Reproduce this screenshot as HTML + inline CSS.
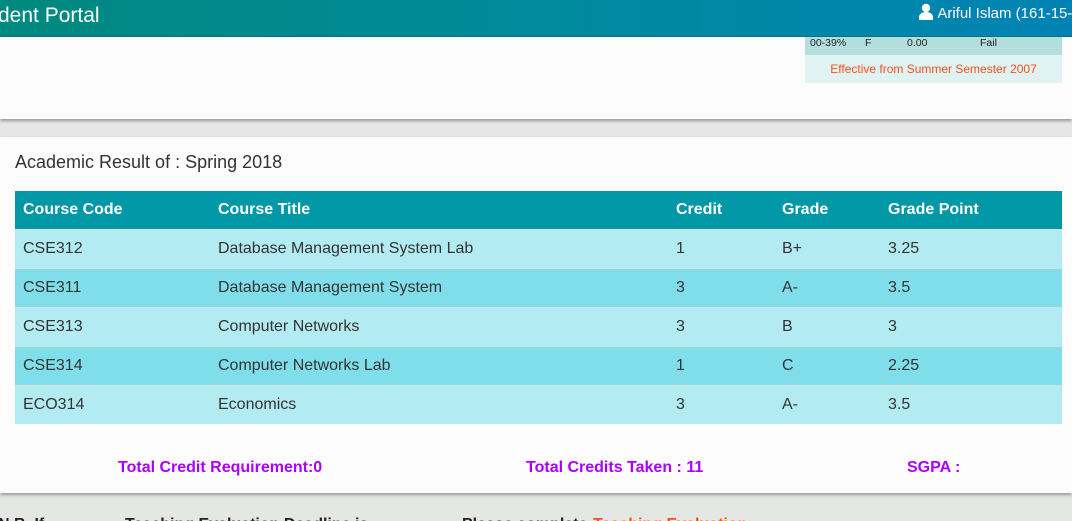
<!DOCTYPE html>
<html style="height:521px;overflow:hidden"><head><meta charset="utf-8"><style>
*{margin:0;padding:0;box-sizing:border-box}
html{width:1072px;height:521px;overflow:hidden}
body{width:1072px;height:521px;overflow:hidden;background:#e5e7e4;font-family:"Liberation Sans",Arial,sans-serif;position:relative}
.top{position:absolute;left:0;top:0;width:1072px;height:37px;background:linear-gradient(90deg,#00897e 0%,#008a9c 50%,#0083b4 100%);border-bottom:1px solid #00707a}
.top .t{position:absolute;left:-2px;top:4px;color:#fff;font-size:21px}
.top .u{position:absolute;left:918px;top:3px;color:#fff;font-size:15px;white-space:nowrap}
.p1{position:absolute;left:0;top:37px;width:1072px;height:82px;background:#fcfcfc;box-shadow:0 2px 3px #999}
.gt{position:absolute;left:805px;top:37px;width:257px}
.gt .r{height:18px;background:#b2dfdb;font-size:10.5px;color:#222;position:relative}
.gt .r span{position:absolute;top:0px}
.gt .e{height:28px;background:#e0f2f1;color:#f4511e;font-size:12px;text-align:center;line-height:28px}
.p2{position:absolute;left:0;top:137px;width:1072px;height:356px;background:#fcfcfc;box-shadow:0 2px 3px #999}
h3{position:absolute;left:15px;top:152px;font-weight:normal;font-size:18px;color:#333}
table{position:absolute;left:15px;top:191px;width:1047px;border-collapse:collapse;font-size:16px;color:#333}
th{background:#0097a7;color:#fff;text-align:left;height:38px;padding-left:8px;font-size:16px}
td{height:39px;padding-left:8px;border-top:1px solid #ddd}
tr.a td{background:#b2ebf2}tr.b td{background:#80deea}
.s{position:absolute;top:459px;color:#aa00ff;font-weight:bold;font-size:16px}
.clip{position:absolute;left:0;top:500px;width:1072px;height:21px;overflow:hidden}
.bt{position:absolute;top:16px;font-weight:bold;font-size:16px;color:#222;white-space:nowrap}
</style></head><body>
<div class="top"><div class="t">dent Portal</div>
<div class="u"><svg width="16" height="17" viewBox="0 0 16 17" style="vertical-align:-2px"><circle cx="8" cy="5" r="4.2" fill="#fff"/><path d="M1 17v-3c0-3 3-5 7-5s7 2 7 5v3z" fill="#fff"/></svg> Ariful Islam (161-15-</div></div>
<div class="p1"></div>
<div class="gt"><div class="r"><span style="left:5px">00-39%</span><span style="left:60px">F</span><span style="left:102px">0.00</span><span style="left:175px">Fail</span></div><div class="e">Effective from Summer Semester 2007</div></div>
<div class="p2"></div>
<h3>Academic Result of : Spring 2018</h3>
<table>
<tr><th style="width:195px">Course Code</th><th style="width:458px">Course Title</th><th style="width:106px">Credit</th><th style="width:106px">Grade</th><th>Grade Point</th></tr>
<tr class="a"><td>CSE312</td><td>Database Management System Lab</td><td>1</td><td>B+</td><td>3.25</td></tr>
<tr class="b"><td>CSE311</td><td>Database Management System</td><td>3</td><td>A-</td><td>3.5</td></tr>
<tr class="a"><td>CSE313</td><td>Computer Networks</td><td>3</td><td>B</td><td>3</td></tr>
<tr class="b"><td>CSE314</td><td>Computer Networks Lab</td><td>1</td><td>C</td><td>2.25</td></tr>
<tr class="a"><td>ECO314</td><td>Economics</td><td>3</td><td>A-</td><td>3.5</td></tr>
</table>
<div class="s" style="left:118px">Total Credit Requirement:0</div>
<div class="s" style="left:526px">Total Credits Taken : 11</div>
<div class="s" style="left:907px">SGPA :</div>
<div class="clip">
<div class="bt" style="left:-2px">N.B. If</div>
<div class="bt" style="left:125px">Teaching Evaluation Deadline is</div>
<div class="bt" style="left:462px">Please complete</div>
<div class="bt" style="left:593px;color:#f4511e">Teaching Evaluation</div>
</div>
</body></html>
